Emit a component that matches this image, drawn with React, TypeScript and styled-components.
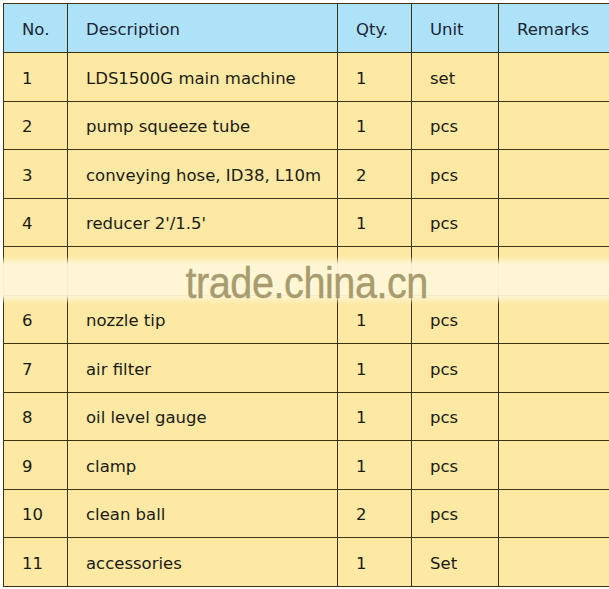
import React from "react";
import styled, { createGlobalStyle } from "styled-components";

const COLORS = {
  header: "#aee2f9",
  row: "#fde9a4",
  line: "#3d3212",
  text: "#1c1a14",
  headText: "#1a2436",
};

const GlobalStyle = createGlobalStyle`
  html, body {
    margin: 0;
    padding: 0;
    background: #ffffff;
    overflow: hidden;
  }
`;

interface Item {
  no: string;
  desc: string;
  qty: string;
  unit: string;
}

const ITEMS: Item[] = [
  { no: "1", desc: "LDS1500G main machine", qty: "1", unit: "set" },
  { no: "2", desc: "pump squeeze tube", qty: "1", unit: "pcs" },
  { no: "3", desc: "conveying hose, ID38, L10m", qty: "2", unit: "pcs" },
  { no: "4", desc: "reducer 2'/1.5'", qty: "1", unit: "pcs" },
  { no: "", desc: "", qty: "", unit: "" },
  { no: "6", desc: "nozzle tip", qty: "1", unit: "pcs" },
  { no: "7", desc: "air filter", qty: "1", unit: "pcs" },
  { no: "8", desc: "oil level gauge", qty: "1", unit: "pcs" },
  { no: "9", desc: "clamp", qty: "1", unit: "pcs" },
  { no: "10", desc: "clean ball", qty: "2", unit: "pcs" },
  { no: "11", desc: "accessories", qty: "1", unit: "Set" },
];

const Page = styled.div`
  position: relative;
  width: 609px;
  height: 589px;
  overflow: hidden;
  padding: 3px 0 0 3px;
  box-sizing: border-box;
`;

const Table = styled.table`
  border-collapse: collapse;
  table-layout: fixed;
  width: 630px;
  font-family: "Comic Sans MS", "DejaVu Sans", sans-serif;
  font-size: 16.5px;
`;

const Row = styled.tr<{ head?: boolean }>`
  height: ${(p) => (p.head ? "49px" : "48.5px")};
  background: ${(p) => (p.head ? COLORS.header : COLORS.row)};
  color: ${(p) => (p.head ? COLORS.headText : COLORS.text)};
`;

const Cell = styled.td`
  border: 1.5px solid ${COLORS.line};
  padding: 3px 0 0 18px;
  vertical-align: middle;
  white-space: nowrap;
  font-weight: normal;
  text-align: left;
`;

const Head = styled(Cell).attrs({ as: "th" })``;

const Watermark = styled.div`
  position: absolute;
  left: 0;
  right: 0;
  top: 256px;
  height: 48px;
  display: flex;
  align-items: center;
  justify-content: center;
  background: linear-gradient(
    to bottom,
    rgba(255, 246, 214, 0) 0%,
    rgba(255, 246, 214, 0.96) 18%,
    rgba(255, 246, 214, 0.96) 82%,
    rgba(255, 246, 214, 0) 100%
  );
`;

const MarkText = styled.span`
  font-family: "Liberation Sans", Arial, sans-serif;
  font-size: 44px;
  color: #a89b6e;
  transform: scaleX(0.9);
  margin: 5px 0 0 5px;
  letter-spacing: -0.5px;
  -webkit-text-stroke: 0.4px #a89b6e;
`;

export default function App() {
  return (
    <Page>
      <GlobalStyle />
      <Table>
        <colgroup>
          <col style={{ width: 64 }} />
          <col style={{ width: 270 }} />
          <col style={{ width: 74 }} />
          <col style={{ width: 87 }} />
          <col style={{ width: 135 }} />
        </colgroup>
        <thead>
          <Row head>
            <Head>No.</Head>
            <Head>Description</Head>
            <Head>Qty.</Head>
            <Head>Unit</Head>
            <Head>Remarks</Head>
          </Row>
        </thead>
        <tbody>
          {ITEMS.map((it, i) => (
            <Row key={i}>
              <Cell>{it.no}</Cell>
              <Cell>{it.desc}</Cell>
              <Cell>{it.qty}</Cell>
              <Cell>{it.unit}</Cell>
              <Cell></Cell>
            </Row>
          ))}
        </tbody>
      </Table>
      <Watermark>
        <MarkText>trade.china.cn</MarkText>
      </Watermark>
    </Page>
  );
}
